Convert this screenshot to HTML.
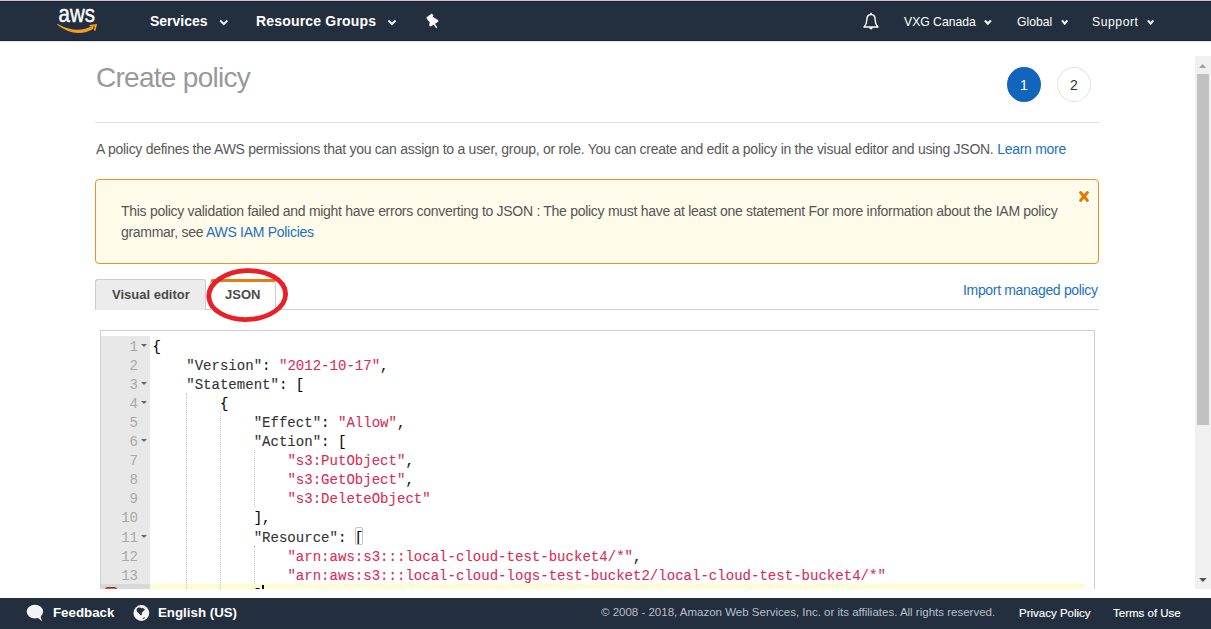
<!DOCTYPE html>
<html><head><meta charset="utf-8">
<style>
*{margin:0;padding:0;box-sizing:border-box}
html,body{width:1211px;height:629px;overflow:hidden;background:#fff;font-family:"Liberation Sans",sans-serif;position:relative}
.a{position:absolute;white-space:nowrap}
#topline{left:0;top:0;width:1211px;height:1px;background:#c9c9c9}
#nav{left:0;top:1px;width:1211px;height:40px;background:#232f3e;border-top:1px solid #1b2431;border-bottom:1px solid #1b2431}
#navsh{left:0;top:41px;width:1211px;height:1px;background:#e4e4e4}
.nb{color:#fff;font-weight:bold;font-size:14px;line-height:14px}
.nr{color:#fff;font-size:12.2px;line-height:14px;margin-top:1px}
.chev{position:absolute;width:6px;height:6px;border-right:1.6px solid #c8cdd3;border-bottom:1.6px solid #c8cdd3;transform:rotate(45deg)}
.tri{position:absolute;width:0;height:0;border-left:4px solid transparent;border-right:4px solid transparent;border-top:4px solid #d5d9de}
#title{left:96px;top:62px;font-size:28px;line-height:32px;color:#999;letter-spacing:-0.72px}
#hr1{left:95px;top:122px;width:1004px;height:1px;background:#dedede}
#para{left:96px;top:141px;font-size:14px;line-height:16px;color:#585858;letter-spacing:-0.27px}
a,.lnk{color:#2270c2;text-decoration:none}
#warn{left:95px;top:179px;width:1004px;height:85px;background:#fffbea;border:1px solid #eb9126;border-radius:4px}
#wtext{left:121px;top:200.6px;font-size:14px;line-height:21px;color:#555;letter-spacing:-0.287px}
#wx{left:1078px;top:189.5px;width:12px;height:13px}
#tab1{left:95px;top:279px;width:111px;height:31px;background:#ececec;border:1px solid #cccccc;border-bottom:none;border-radius:3px 3px 0 0}
#tab1 span{position:absolute;left:16px;top:8px;font-size:13px;font-weight:bold;color:#4a4a4a;line-height:14px}
#tab2{left:210px;top:279px;width:66px;height:31px;background:#fff;border:1px solid #cfcfcf;border-top:3px solid #e67c0f;border-bottom:none;border-radius:3px 3px 0 0}
#tab2 span{position:absolute;left:14px;top:6px;font-size:13px;font-weight:bold;color:#4a4a4a;line-height:14px}
#tabline{left:95px;top:309px;width:1004px;height:1px;background:#cfcfcf}
#imp{left:963px;top:282px;font-size:14px;line-height:16px;letter-spacing:-0.33px}
#ed{left:100px;top:330px;width:995px;height:300px;border:1px solid #cfcfcf;background:#fff}
#gut{left:101px;top:336px;width:49px;height:260px;background:#e8e8e8}
.ln{position:absolute;left:101px;width:37px;text-align:right;font-family:"Liberation Mono",monospace;font-size:14.05px;line-height:19px;color:#a8a8a8}
.fold{position:absolute;left:141.2px;width:0;height:0;border-left:3.1px solid transparent;border-right:3.1px solid transparent;border-top:3.2px solid #666;margin-top:-0.5px}
.cl{position:absolute;left:152.5px;font-family:"Liberation Mono",monospace;font-size:14.05px;line-height:19px;color:#333;white-space:pre;-webkit-text-stroke:0.1px currentColor}
.s{color:#d92d57}
.k{color:#333}
.p{color:#111}
.bb{font-weight:normal;color:#000}
.g{position:absolute;width:0;border-left:1px dotted #c6c6c6}
#actg{left:101px;top:584px;width:49px;height:5px;background:#d8d8d8}
#actl{left:150px;top:584px;width:934px;height:5px;background:#fffccf}
#err{left:105px;top:587px;width:12px;height:4px;background:#f25a2c;border-top:1px solid #6a3a2a;border-radius:3px 3px 0 0}
#clipw{left:96px;top:589px;width:1100px;height:9px;background:#fff}
#sb{left:1195px;top:56px;width:16px;height:533px;background:#f0f0f0}
#sbth{left:1197px;top:74px;width:12px;height:351px;background:#c1c1c1}
#foot{left:0;top:598px;width:1211px;height:31px;background:#232f3e}
.fb{color:#fff;font-weight:bold;font-size:13.3px;line-height:14px}
.fr{color:#b8bfc7;font-size:11.5px;line-height:14px}
.fw{color:#fff;font-size:11.5px;line-height:14px;-webkit-text-stroke:0.15px #fff}
</style></head><body>
<div class="a" id="topline"></div>
<div class="a" id="nav"></div>
<div class="a" id="navsh"></div>

<!-- aws logo -->
<svg class="a" style="left:0;top:0" width="110" height="41" viewBox="0 0 110 41">
<text x="58.6" y="22" font-family="Liberation Sans" font-size="24" fill="#fff" stroke="#fff" stroke-width="0.45" textLength="36.4" lengthAdjust="spacingAndGlyphs">aws</text>
<path d="M56.8 24.4 Q76 39.2 93.8 28.4 L92.6 26 Q76 34.2 57.8 23.9 Z" fill="#f79f1a"/>
<path d="M89.4 24.9 L97.1 24 L95.4 31 L94 30.4 L94.6 26.4 L89.8 26.6 Z" fill="#f79f1a"/>
</svg>

<div class="a nb" style="left:150px;top:14px">Services</div>
<svg class="a" style="left:0;top:0" width="240" height="41"><path d="M220.2 20.6 L223.8 24 L227.4 20.6" stroke="#e8eaed" stroke-width="2" fill="none"/></svg>
<div class="a nb" style="left:256px;top:14px;letter-spacing:0.18px">Resource Groups</div>
<svg class="a" style="left:0;top:0" width="410" height="41"><path d="M388.4 20.6 L392 24 L395.6 20.6" stroke="#e8eaed" stroke-width="2" fill="none"/></svg>
<!-- pin -->
<svg class="a" style="left:0;top:0" width="450" height="41" viewBox="0 0 450 41">
<path d="M426.7 17.6 L431.4 14.1 L433.1 15 L432.4 16.9 L437.9 20.3 L438.1 21.4 L430.7 26.2 L429.5 25.5 L430 22.2 L427.4 19.3 Z" fill="#fff" stroke="#fff" stroke-width="0.6" stroke-linejoin="round"/>
<path d="M433.8 23.3 L436.5 27.4" stroke="#fff" stroke-width="1.4" stroke-linecap="round"/>
</svg>

<!-- bell -->
<svg class="a" style="left:862px;top:12px" width="18" height="19" viewBox="0 0 18 19">
<path d="M9 2.5 C5.5 2.5 4.8 5.5 4.8 8 C4.8 11.5 3.8 13.2 2 15 L16 15 C14.2 13.2 13.2 11.5 13.2 8 C13.2 5.5 12.5 2.5 9 2.5 Z" stroke="#fff" stroke-width="1.4" fill="none" stroke-linejoin="round"/>
<circle cx="9" cy="1.8" r="1" fill="#fff"/>
<path d="M6.8 15.5 Q9 19.6 11.2 15.5 Z" fill="#fff"/>
</svg>
<div class="a nr" style="left:904px;top:14px">VXG Canada</div>
<svg class="a" style="left:0;top:0" width="1211" height="41"><path d="M984.9 20.4 L987.9 23.6 L990.9 20.4" stroke="#eef0f2" stroke-width="2.2" fill="none"/></svg>
<div class="a nr" style="left:1017px;top:14px">Global</div>
<svg class="a" style="left:0;top:0" width="1211" height="41"><path d="M1062.0 20.4 L1064.7 23.6 L1067.4 20.4" stroke="#eef0f2" stroke-width="2.2" fill="none"/></svg>
<div class="a nr" style="left:1092px;top:14px;letter-spacing:0.55px">Support</div>
<svg class="a" style="left:0;top:0" width="1211" height="41"><path d="M1147.9 20.4 L1150.6 23.6 L1153.3 20.4" stroke="#eef0f2" stroke-width="2.2" fill="none"/></svg>

<div class="a" id="title">Create policy</div>
<div class="a" style="left:1007px;top:67px;width:34px;height:35px;border-radius:50%;background:#1166bb;color:#fff;font-size:14px;line-height:37px;text-align:center">1</div>
<div class="a" style="left:1057px;top:67px;width:34px;height:35px;border-radius:50%;background:#fff;border:1px solid #e2e2e2;color:#333;font-size:14px;line-height:35px;text-align:center">2</div>
<div class="a" id="hr1"></div>

<div class="a" id="para">A policy defines the AWS permissions that you can assign to a user, group, or role. You can create and edit a policy in the visual editor and using JSON. <span class="lnk">Learn more</span></div>

<div class="a" id="warn"></div>
<div class="a" id="wtext">This policy validation failed and might have errors converting to JSON : The policy must have at least one statement For more information about the IAM policy<br>grammar, see <span class="lnk">AWS IAM Policies</span></div>
<svg class="a" id="wx" viewBox="0 0 12 13"><path d="M2.6 2.6 L9.4 10.4 M9.4 2.6 L2.6 10.4" stroke="#e07a00" stroke-width="3" stroke-linecap="round"/></svg>

<div class="a" id="tabline"></div>
<div class="a" id="tab1"><span>Visual editor</span></div>
<div class="a" id="tab2"><span>JSON</span></div>
<div class="a lnk" id="imp">Import managed policy</div>

<div class="a" id="ed"></div>
<div class="a" id="gut"></div>
<div class="a" id="actg"></div>
<div class="a" id="actl"></div>
<div class="a" id="err"></div>
<div id="code">
<div class="g" style="left:186.2px;top:393.0px;height:209.8px"></div>
<div class="g" style="left:219.9px;top:412.1px;height:190.7px"></div>
<div class="g" style="left:253.7px;top:450.2px;height:57.2px"></div>
<div class="g" style="left:253.7px;top:545.6px;height:38.1px"></div>
<div class="ln" style="top:337.80px">1</div>
<div class="fold" style="top:344.30px"></div>
<div class="cl" style="top:337.80px"><span class="p bb">{</span></div>
<div class="ln" style="top:356.87px">2</div>
<div class="cl" style="top:356.87px">    <span class="k">"Version"</span><span class="p">: </span><span class="s">"2012-10-17"</span><span class="p">,</span></div>
<div class="ln" style="top:375.94px">3</div>
<div class="fold" style="top:382.44px"></div>
<div class="cl" style="top:375.94px">    <span class="k">"Statement"</span><span class="p">: </span><span class="p bb">[</span></div>
<div class="ln" style="top:395.01px">4</div>
<div class="fold" style="top:401.51px"></div>
<div class="cl" style="top:395.01px">        <span class="p bb">{</span></div>
<div class="ln" style="top:414.08px">5</div>
<div class="cl" style="top:414.08px">            <span class="k">"Effect"</span><span class="p">: </span><span class="s">"Allow"</span><span class="p">,</span></div>
<div class="ln" style="top:433.15px">6</div>
<div class="fold" style="top:439.65px"></div>
<div class="cl" style="top:433.15px">            <span class="k">"Action"</span><span class="p">: </span><span class="p bb">[</span></div>
<div class="ln" style="top:452.22px">7</div>
<div class="cl" style="top:452.22px">                <span class="s">"s3:PutObject"</span><span class="p">,</span></div>
<div class="ln" style="top:471.29px">8</div>
<div class="cl" style="top:471.29px">                <span class="s">"s3:GetObject"</span><span class="p">,</span></div>
<div class="ln" style="top:490.36px">9</div>
<div class="cl" style="top:490.36px">                <span class="s">"s3:DeleteObject"</span></div>
<div class="ln" style="top:509.43px">10</div>
<div class="cl" style="top:509.43px">            <span class="p bb">]</span><span class="p">,</span></div>
<div class="ln" style="top:528.50px">11</div>
<div class="fold" style="top:535.00px"></div>
<div class="cl" style="top:528.50px">            <span class="k">"Resource"</span><span class="p">: </span><span class="p bb">[</span></div>
<div class="ln" style="top:547.57px">12</div>
<div class="cl" style="top:547.57px">                <span class="s">"arn:aws:s3:::local-cloud-test-bucket4/*"</span><span class="p">,</span></div>
<div class="ln" style="top:566.64px">13</div>
<div class="cl" style="top:566.64px">                <span class="s">"arn:aws:s3:::local-cloud-logs-test-bucket2/local-cloud-test-bucket4/*"</span></div>
<div class="cl" style="top:585.71px">            <span class="p bb">]</span></div>
</div>
<div class="a" style="left:354.5px;top:526.5px;width:8.5px;height:18px;border:1px solid #c4c4c4;border-radius:2px"></div>
<div class="a" style="left:262px;top:585px;width:1.6px;height:5px;background:#000"></div>
<div class="a" id="clipw"></div>

<!-- ellipse -->
<svg class="a" style="left:200px;top:262px" width="95" height="66" viewBox="0 0 95 66">
<ellipse cx="47.2" cy="33.1" rx="38.4" ry="24.4" stroke="#e8202a" stroke-width="4.8" fill="none" transform="rotate(-2.5 47.2 33.1)"/>
</svg>

<div class="a" id="sb"></div>
<div class="a" id="sbth"></div>

<div class="a" id="foot"></div>
<div class="a fb" style="left:53px;top:606px">Feedback</div>
<div class="a fb" style="left:158px;top:606px">English (US)</div>
<div class="a fr" style="left:601px;top:605px">© 2008 - 2018, Amazon Web Services, Inc. or its affiliates. All rights reserved.</div>
<div class="a fw" style="left:1019px;top:605.5px">Privacy Policy</div>
<div class="a fw" style="left:1113px;top:605.5px">Terms of Use</div>
<svg class="a" style="left:0;top:598px" width="160" height="31" viewBox="0 598 160 31">
<ellipse cx="34.9" cy="611.6" rx="8.2" ry="6.8" fill="#f4f4f4"/>
<path d="M36 616.5 L42 621.3 L40.2 615.2 Z" fill="#f4f4f4"/>
<circle cx="141.35" cy="613" r="7.9" fill="#f4f4f4"/>
<path d="M136.5 609.5 L137.5 607.8 L140.4 607.4 L141.6 608.5 L142.5 607.8 L144.3 608.9 L145 609.7 L143.3 611.2 L141.9 612.4 L141.9 614.1 L141.4 615.5 L140 614.7 L138.8 613.2 L137.3 612 L136.7 610.8 Z" fill="#232f3e"/>
<path d="M142.5 618.6 L143.7 617.4 L145 617.2 L144.3 618.4 L142.9 619 Z" fill="#232f3e"/>
</svg>
<svg class="a" style="left:1195px;top:56px" width="16" height="533" viewBox="1195 56 16 533">
<path d="M1198.9 68 L1202.6 64.1 L1206.3 68 Z" fill="#a3a3a3"/>
<path d="M1199.2 577.9 L1206.6 577.9 L1202.9 582 Z" fill="#505050"/>
</svg>
</body></html>
